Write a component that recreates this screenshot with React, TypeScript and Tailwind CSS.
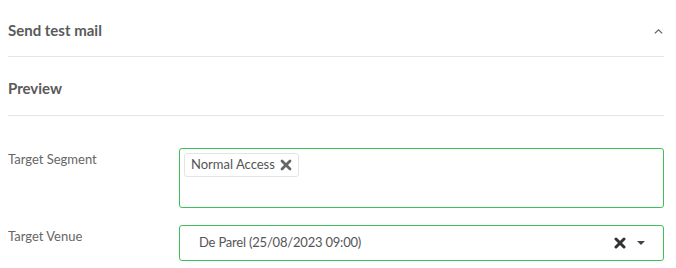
function XIcon({ className, width = 2.6 }: { className?: string; width?: number }) {
  return (
    <svg viewBox="0 0 12 12" className={className} fill="none" stroke="currentColor" strokeWidth={width} strokeLinecap="round">
      <line x1="2" y1="2" x2="10" y2="10" />
      <line x1="10" y1="2" x2="2" y2="10" />
    </svg>
  )
}

export default function App() {
  return (
    <div className="w-[676px] h-[268px] bg-white px-2 text-[#555]" style={{ fontFamily: 'Lato, "Noto Sans", sans-serif' }}>
      <div className="w-[656px]">
        {/* Send test mail */}
        <div className="flex items-center justify-between h-[57px] border-b border-[#e4e6e8]">
          <span className="text-[15px] font-bold text-[#5a5a5a] pt-[4px]">Send test mail</span>
          <svg viewBox="0 0 9 5" className="w-[9px] h-[5px] mr-[1px] mt-[7px] text-[#666]" fill="none" stroke="currentColor" strokeWidth="1.3">
            <polyline points="0.8,4.4 4.5,0.9 8.2,4.4" />
          </svg>
        </div>

        {/* Preview */}
        <div className="flex items-center h-[59px] border-b border-[#e4e6e8]">
          <span className="text-[15px] font-bold text-[#5a5a5a] pt-[4px]">Preview</span>
        </div>

        {/* Target Segment */}
        <div className="flex mt-[32px]">
          <div className="w-[171px] text-[13px] text-[#666] pt-[2px]">Target Segment</div>
          <div className="flex-1 h-[60px] border border-[#3fbf57] rounded-[3px] p-[4px] flex items-start">
            <div className="flex items-center h-[24px] border border-[#e2e4e6] rounded-[3px] pl-[6px] pr-[6px] text-[13px] text-[#555] bg-white">
              <span>Normal Access</span>
              <XIcon className="w-[12px] h-[12px] ml-[5px] text-[#666]" width={2.8} />
            </div>
          </div>
        </div>

        {/* Target Venue */}
        <div className="flex mt-[17px]">
          <div className="w-[171px] text-[13px] text-[#666] pt-[2px]">Target Venue</div>
          <div className="flex-1 h-[36px] border border-[#3fbf57] rounded-[3px] flex items-center pl-[19px] pr-[18px]">
            <span className="flex-1 text-[13px] text-[#555] tracking-[-0.2px]">De Parel (25/08/2023 09:00)</span>
            <XIcon className="w-[12px] h-[12px] text-[#333]" width={3} />
            <svg viewBox="0 0 8 4" className="w-[8px] h-[4px] ml-[11px] text-[#444]" fill="currentColor">
              <polygon points="0,0 8,0 4,4" />
            </svg>
          </div>
        </div>
      </div>
    </div>
  )
}
